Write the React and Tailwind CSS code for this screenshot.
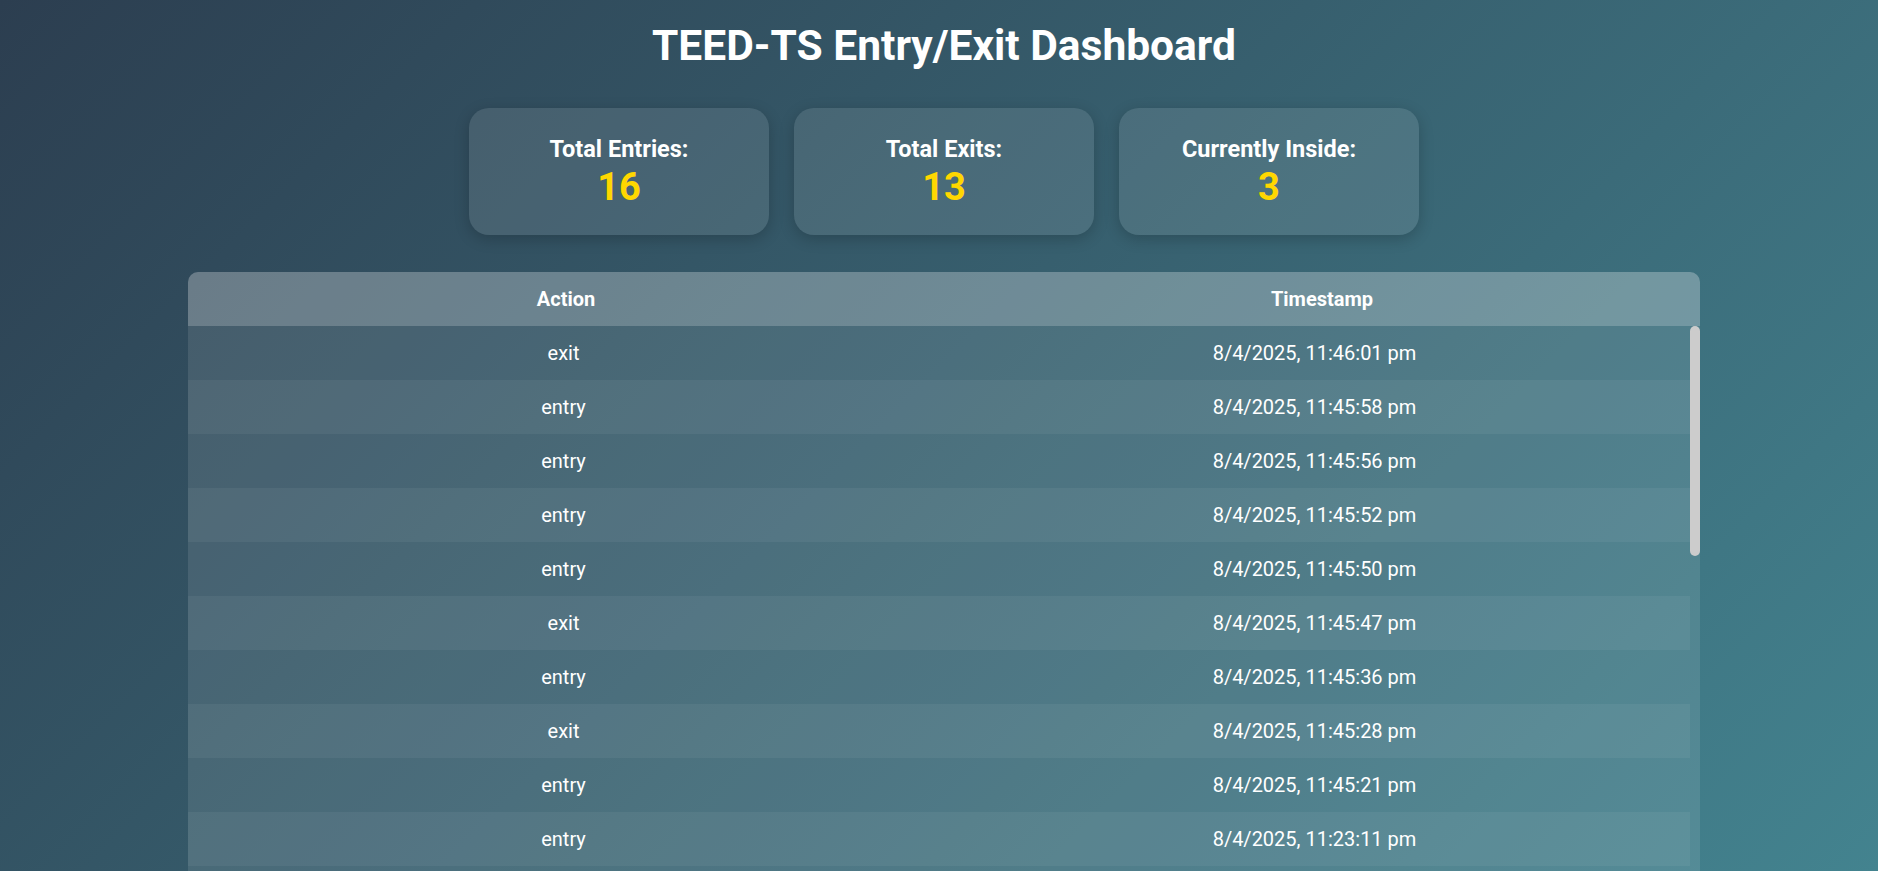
import React from "react";

const stats = [
  { label: "Total Entries:", value: 16 },
  { label: "Total Exits:", value: 13 },
  { label: "Currently Inside:", value: 3 },
];

const logs = [
  ["exit", "8/4/2025, 11:46:01 pm"],
  ["entry", "8/4/2025, 11:45:58 pm"],
  ["entry", "8/4/2025, 11:45:56 pm"],
  ["entry", "8/4/2025, 11:45:52 pm"],
  ["entry", "8/4/2025, 11:45:50 pm"],
  ["exit", "8/4/2025, 11:45:47 pm"],
  ["entry", "8/4/2025, 11:45:36 pm"],
  ["exit", "8/4/2025, 11:45:28 pm"],
  ["entry", "8/4/2025, 11:45:21 pm"],
  ["entry", "8/4/2025, 11:23:11 pm"],
  ["exit", "8/4/2025, 11:22:54 pm"],
  ["exit", "8/4/2025, 11:22:40 pm"],
  ["entry", "8/4/2025, 11:22:31 pm"],
  ["exit", "8/4/2025, 11:21:15 pm"],
  ["entry", "8/4/2025, 11:20:48 pm"],
  ["exit", "8/4/2025, 11:18:02 pm"],
  ["exit", "8/4/2025, 11:17:44 pm"],
  ["entry", "8/4/2025, 11:17:30 pm"],
  ["entry", "8/4/2025, 11:16:09 pm"],
  ["exit", "8/4/2025, 11:12:37 pm"],
  ["exit", "8/4/2025, 11:12:21 pm"],
  ["entry", "8/4/2025, 11:10:58 pm"],
  ["exit", "8/4/2025, 11:09:13 pm"],
  ["entry", "8/4/2025, 11:08:46 pm"],
  ["exit", "8/4/2025, 11:05:32 pm"],
  ["entry", "8/4/2025, 11:04:27 pm"],
  ["exit", "8/4/2025, 11:02:19 pm"],
  ["entry", "8/4/2025, 11:01:05 pm"],
  ["entry", "8/4/2025, 10:59:40 pm"],
];

const StatCard = ({ label, value }) => (
  <div className="w-[300px] h-[127px] rounded-[20px] bg-white/10 shadow-[0_4px_15px_rgba(0,0,0,0.2)] flex flex-col items-center justify-center">
    <div className="text-[23.5px] font-bold leading-[28px] text-white">{label}</div>
    <div className="mt-[2px] text-[38px] font-bold leading-[44px] text-[#ffd700]">{value}</div>
  </div>
);

export default function App() {
  return (
    <div
      className="h-screen overflow-hidden bg-[linear-gradient(135deg,#2c3e50,#43838f)] pl-[10px] text-white"
      style={{ fontFamily: "Roboto, 'Liberation Sans', sans-serif" }}
    >
      <div className="flex flex-col items-center pt-[21px]">
        <h1 className="text-[42.5px] font-bold leading-[50px]">TEED-TS Entry/Exit Dashboard</h1>

        <div className="mt-[37px] flex gap-[25px]">
          {stats.map((s) => (
            <StatCard key={s.label} label={s.label} value={s.value} />
          ))}
        </div>

        <div className="mt-[37px] w-[1512px] rounded-[10px] overflow-hidden bg-white/10">
          <div className="grid grid-cols-2 bg-white/20 text-[20px] font-bold leading-[24px]">
            <div className="py-[15px] text-center">Action</div>
            <div className="py-[15px] text-center">Timestamp</div>
          </div>
          <div className="flex">
            <div className="flex-1 max-h-[600px] overflow-y-auto [scrollbar-width:none]">
              {logs.map(([action, time], i) => (
                <div
                  key={time}
                  className={`grid grid-cols-2 text-[20px] leading-[24px] ${i % 2 === 1 ? "bg-white/5" : ""}`}
                >
                  <div className="py-[15px] text-center">{action}</div>
                  <div className="py-[15px] text-center">{time}</div>
                </div>
              ))}
            </div>
            {/* scrollbar track */}
            <div className="w-[10px]">
              <div className="h-[230px] rounded-[5px] bg-[#cccccc]" />
            </div>
          </div>
        </div>
      </div>
    </div>
  );
}
